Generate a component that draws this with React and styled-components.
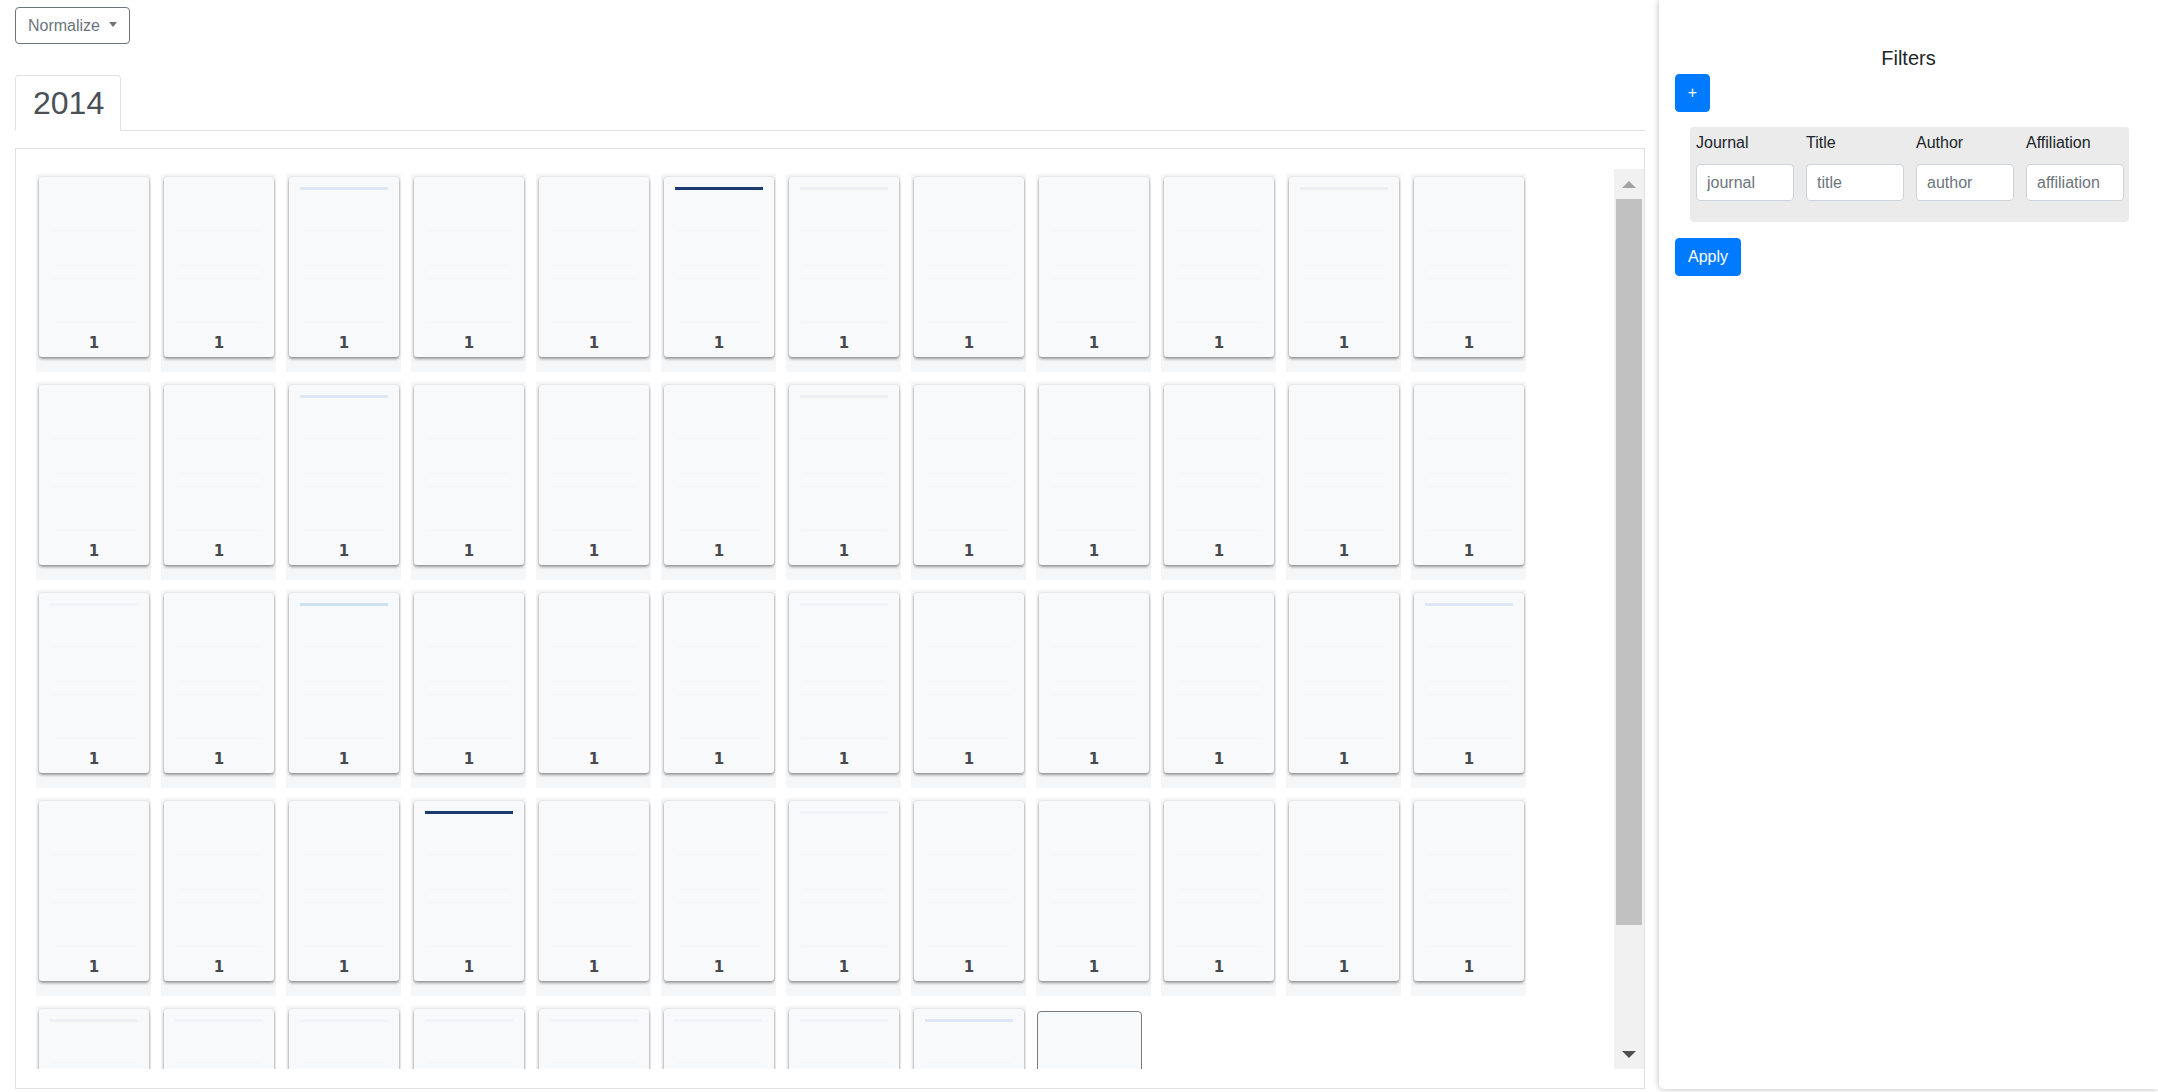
import React from "react";
import styled, { createGlobalStyle } from "styled-components";

const GlobalStyle = createGlobalStyle`
  html, body { margin: 0; padding: 0; background: #fff; }
  body {
    font-family: "Liberation Sans", Arial, Helvetica, sans-serif;
    color: #212529;
    font-size: 16px;
  }
  * { box-sizing: border-box; }
`;

const Layout = styled.div`
  display: flex;
  width: 2158px;
  height: 1092px;
  overflow: hidden;
`;

const Main = styled.main`
  width: 1659px;
  flex: none;
  padding: 7px 14px 0 15px;
  display: flex;
  flex-direction: column;
`;

const DropdownButton = styled.button`
  align-self: flex-start;
  display: inline-flex;
  align-items: center;
  gap: 9px;
  height: 37px;
  padding: 0 12px;
  border: 1px solid #6c757d;
  border-radius: 4px;
  background: #fff;
  color: #6c757d;
  font-family: "Liberation Sans", Arial, sans-serif;
  font-size: 16px;
`;

const Caret = styled.span`
  width: 0;
  height: 0;
  border-left: 4px solid transparent;
  border-right: 4px solid transparent;
  border-top: 5px solid #6c757d;
  margin-top: -2px;
`;

const TabBar = styled.div`
  margin-top: 31px;
  display: flex;
  border-bottom: 1px solid #dee2e6;
`;

const Tab = styled.div`
  margin-bottom: -1px;
  padding: 8px 16px 8px 17px;
  font-size: 32px;
  line-height: 38px;
  color: #495057;
  background: #fff;
  border: 1px solid #dee2e6;
  border-bottom-color: #fff;
  border-radius: 4px 4px 0 0;
`;

const Panel = styled.section`
  margin-top: 17px;
  border: 1px solid #dee2e6;
  padding: 20px 0 19px 15px;
  display: flex;
`;

const Viewport = styled.div`
  flex: 1;
  height: 900px;
  overflow: hidden;
`;

const Grid = styled.div`
  display: flex;
  flex-wrap: wrap;
  align-content: flex-start;
`;

const Slot = styled.div`
  width: 115px;
  height: 198px;
  margin: 5px;
  padding: 3px 2px 0 3px;
  background: #f5f6f8;
`;

const Card = styled.div`
  width: 110px;
  height: 180px;
  background: #f8f9fa;
  border-radius: 3px;
  box-shadow: 0 2px 3px rgba(0, 0, 0, 0.38), 0 0 2px rgba(0, 0, 0, 0.18);
  display: flex;
  flex-direction: column;
  align-items: center;
  padding: 10px 11px 5px;
`;

const PageNumber = styled.div`
  margin-top: auto;
  font-family: "DejaVu Sans", Verdana, sans-serif;
  font-weight: 700;
  font-size: 15px;
  line-height: 18px;
  color: #46494d;
`;

const PlaceholderCard = styled.div`
  width: 105px;
  height: 180px;
  margin: 10px 5px 5px 6px;
  background: #f8f9fa;
  border: 1px solid #7a7a7a;
  border-radius: 4px;
`;

const Scrollbar = styled.div`
  width: 30px;
  height: 900px;
  flex: none;
  background: #f1f1f1;
  display: flex;
  flex-direction: column;
  align-items: center;
`;

const ArrowButton = styled.div`
  width: 100%;
  height: 30px;
  flex: none;
  display: flex;
  align-items: center;
  justify-content: center;
`;

const Arrow = styled.span`
  width: 0;
  height: 0;
  border-left: 7px solid transparent;
  border-right: 7px solid transparent;
  ${(p) =>
    p.$up
      ? `border-bottom: 7px solid #a3a3a3;`
      : `border-top: 7px solid #505050;`}
`;

const Thumb = styled.div`
  width: 26px;
  height: 726px;
  flex: none;
  background: #c1c1c1;
`;

const Track = styled.div`
  flex: 1;
`;

const Sidebar = styled.aside`
  width: 499px;
  height: 1089px;
  flex: none;
  padding: 46px 16px 0;
  background: #fff;
  border-radius: 0 0 0 5px;
  box-shadow: 0 0 6px rgba(0, 0, 0, 0.28);
  display: flex;
  flex-direction: column;
  align-items: flex-start;
`;

const Title = styled.h5`
  margin: 0;
  align-self: stretch;
  text-align: center;
  font-size: 20px;
  line-height: 24px;
  font-weight: 400;
  color: #212529;
`;

const PrimaryButton = styled.button`
  height: 38px;
  border: 1px solid #007bff;
  border-radius: 4px;
  background: #007bff;
  color: #fff;
  font-family: "Liberation Sans", Arial, sans-serif;
  font-size: 16px;
  padding: 0 ${(p) => (p.$small ? "0" : "12px")};
  width: ${(p) => (p.$small ? "35px" : "auto")};
  margin-top: ${(p) => p.$mt}px;
`;

const FilterBox = styled.div`
  margin: 15px 0 0 15px;
  width: 439px;
  height: 95px;
  background: #ebebeb;
  border-radius: 4px;
  padding: 4px 5px 0 6px;
  display: grid;
  grid-template-columns: repeat(4, 98px);
  grid-template-rows: 24px 37px;
  column-gap: 12px;
  row-gap: 9px;
`;

const FilterLabel = styled.div`
  font-size: 16px;
  line-height: 24px;
  color: #212529;
`;

const FilterInput = styled.input`
  width: 98px;
  height: 37px;
  border: 1px solid #ced4da;
  border-radius: 4px;
  padding: 0 10px;
  background: #fff;
  font-family: "Liberation Sans", Arial, sans-serif;
  font-size: 16px;
  color: #495057;
  &::placeholder {
    color: #6c757d;
  }
`;

const NAVY = "#1b3a70";
const LIGHT = "#dde8f5";
const BLUE = "#d0e1f2";
const FAINT = "#edf0f4";
const VFAINT = "#f2f4f7";

const topLines = [
  [null, null, LIGHT, null, null, NAVY, FAINT, null, null, null, FAINT, null],
  [null, null, LIGHT, null, null, null, FAINT, null, null, null, null, null],
  [VFAINT, null, BLUE, null, null, null, VFAINT, null, null, null, null, LIGHT],
  [null, null, null, NAVY, null, null, VFAINT, null, null, null, null, null],
  [FAINT, VFAINT, VFAINT, VFAINT, VFAINT, VFAINT, VFAINT, LIGHT],
];

const FAINT_LINE = "#f4f5f7";

function MiniChart({ top }) {
  return (
    <svg width="88" height="140" viewBox="0 0 88 140" style={{ display: "block" }}>
      {top && <rect x="0" y="0" width="88" height="3" fill={top} />}
      <rect x="2" y="43" width="84" height="1" fill={FAINT_LINE} />
      <rect x="4" y="78" width="80" height="1" fill={FAINT_LINE} />
      <rect x="2" y="91" width="84" height="1" fill={FAINT_LINE} />
      <rect x="3" y="135" width="82" height="1" fill={FAINT_LINE} />
    </svg>
  );
}

const filters = [
  { label: "Journal", placeholder: "journal" },
  { label: "Title", placeholder: "title" },
  { label: "Author", placeholder: "author" },
  { label: "Affiliation", placeholder: "affiliation" },
];

export default function App() {
  const cards = topLines.flat();
  return (
    <>
      <GlobalStyle />
      <Layout>
        <Main>
          <DropdownButton>
            Normalize
            <Caret />
          </DropdownButton>
          <TabBar>
            <Tab>2014</Tab>
          </TabBar>
          <Panel>
            <Viewport>
              <Grid>
                {cards.map((top, i) => (
                  <Slot key={i}>
                    <Card>
                      <MiniChart top={top} />
                      <PageNumber>1</PageNumber>
                    </Card>
                  </Slot>
                ))}
                <PlaceholderCard />
              </Grid>
            </Viewport>
            <Scrollbar>
              <ArrowButton>
                <Arrow $up />
              </ArrowButton>
              <Thumb />
              <Track />
              <ArrowButton>
                <Arrow />
              </ArrowButton>
            </Scrollbar>
          </Panel>
        </Main>
        <Sidebar>
          <Title>Filters</Title>
          <PrimaryButton $small $mt={4}>+</PrimaryButton>
          <FilterBox>
            {filters.map((f) => (
              <FilterLabel key={f.label}>{f.label}</FilterLabel>
            ))}
            {filters.map((f) => (
              <FilterInput key={f.label} placeholder={f.placeholder} />
            ))}
          </FilterBox>
          <PrimaryButton $mt={16}>Apply</PrimaryButton>
        </Sidebar>
      </Layout>
    </>
  );
}
